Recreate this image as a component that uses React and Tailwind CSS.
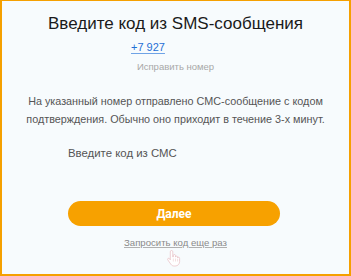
import React from 'react';

const HandCursor = () => (
    <svg width="16" height="18" viewBox="0 0 16 18" className="block">
        <path
            d="M5.5 1.5c.8 0 1.3.5 1.3 1.3V8l.5-.1V6.6c0-.7.5-1.1 1.1-1.1s1.1.4 1.1 1.1v1.5c0-.6.5-1 1.1-1s1 .4 1 1v1c0-.6.5-.9 1-.9s1 .4 1 1v3.3c0 2.5-1.8 4.5-4.3 4.5H8.1c-1.4 0-2.4-.6-3.2-1.7L1.8 10.9c-.4-.5-.3-1.2.2-1.5.5-.3 1.1-.2 1.5.3l.8 1.1V2.8c0-.8.4-1.3 1.2-1.3z"
            fill="#ffffff"
            stroke="#e6bcc1"
            strokeWidth="0.7"
        />
        <path d="M7.3 9.5v3M9.5 9.5v3M11.6 10v2.5" stroke="#e6bcc1" strokeWidth="0.5" />
    </svg>
);

const App = () => {
    return (
        <div
            className="w-[351px] h-[276px] bg-[#f7fbfd] border-[#f5a000] border-x-2 border-b-2 border-t overflow-hidden"
            style={{ fontFamily: '"Liberation Sans", Arial, sans-serif' }}
        >
            <h1 className="pt-[13px] text-center text-[17px] leading-[20px] text-[#1a1a1a] font-normal">
                Введите код из SMS-сообщения
            </h1>

            <div className="mt-[5px] pl-[129px] text-[11px] leading-[16px]">
                <a className="text-[#1f6fd6] underline underline-offset-2 decoration-[#6fa3e6]">
                    +7 927
                </a>
            </div>

            <div className="mt-[5px] text-center text-[9.5px] leading-[14px] text-[#a8a8a8]">
                Исправить номер
            </div>

            <p className="mt-[18px] px-[10px] text-center text-[10.8px] leading-[18px] text-[#555]">
                На указанный номер отправлено СМС-сообщение с кодом подтверждения. Обычно оно приходит в течение 3-х минут.
            </p>

            <div className="mt-[17px] ml-[66px] text-[11.4px] leading-[16px] text-[#555]">
                Введите код из СМС
            </div>

            <button
                className="mt-[40px] ml-[66px] w-[212px] h-[25px] rounded-full bg-[#f7a100] text-white text-[12px] leading-[16px] font-bold flex items-center justify-center"
                style={{ fontFamily: 'Roboto, "Liberation Sans", sans-serif' }}
            >
                Далее
            </button>

            <div className="mt-[10px] text-center text-[9.6px] leading-[14px] text-[#8a8a8a] underline underline-offset-1 decoration-[#b0b0b0]">
                Запросить код еще раз
            </div>

            <div className="mt-[-1px] pl-[164px] leading-[0px]">
                <HandCursor />
            </div>
        </div>
    );
};

export default App;
